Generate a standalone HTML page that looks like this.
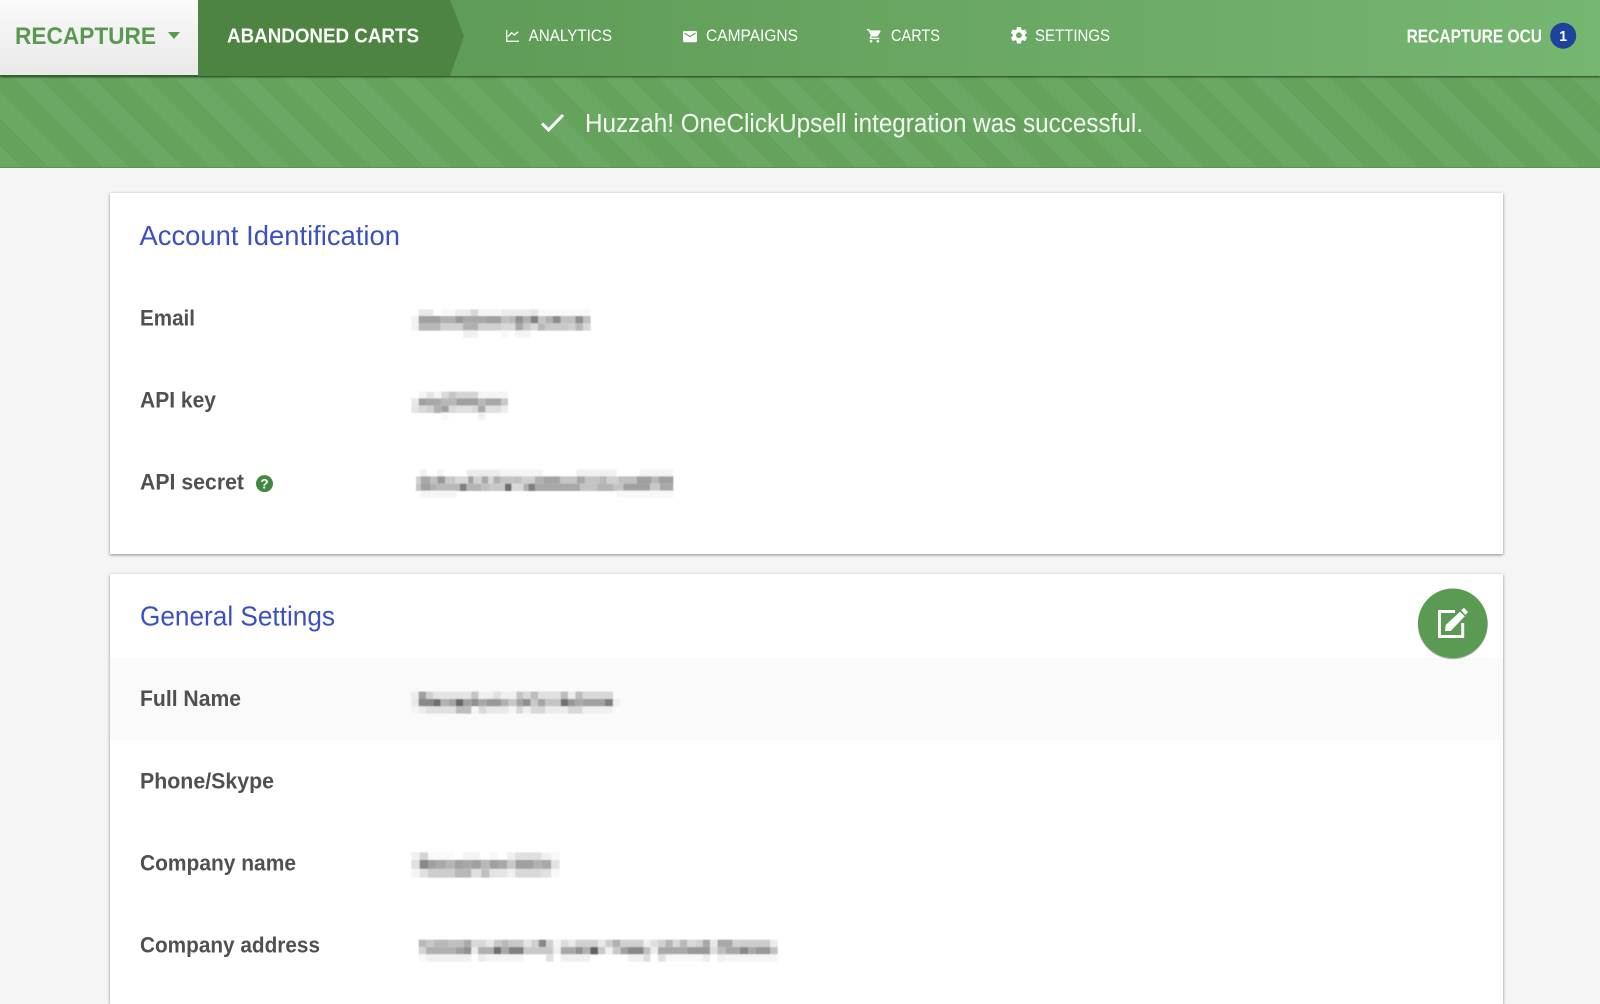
<!DOCTYPE html>
<html lang="en">
<head>
<meta charset="utf-8">
<title>Recapture</title>
<style>
html,body{margin:0;padding:0;width:1600px;height:992px;overflow:hidden;background:#f5f5f5;font-family:"Liberation Sans",sans-serif}
.abs{position:absolute}
#hdr{left:0;top:0;width:1600px;height:76px;background:linear-gradient(to right,#569650 0,#5f9c57 470px,#68a661 900px,#75b671 1600px);box-shadow:0 1px 2px rgba(0,0,0,.65);z-index:3}
#brand{left:0;top:0;width:198px;height:75px;background:linear-gradient(#fafafa,#e9e9e9);border-bottom:1px solid #2f6b28}
#tab{left:198px;top:0;width:266px;height:76px;background:#4e8441;clip-path:polygon(0 0,252px 0,266px 36px,252px 76px,0 76px)}
#banner{left:0;top:76px;width:1600px;height:91px;border-bottom:1px solid #4f9c46;background:repeating-linear-gradient(45deg,#6ba864 0,#6ba864 15px,#65a35d 15px,#65a35d 34.5px,#6ba864 34.5px,#6ba864 38px)}
.card{left:110px;width:1393px;background:#fff;box-shadow:0 1px 3px rgba(0,0,0,.45)}
#c1{top:193px;height:361px}
#c2{top:574px;height:430px}
#row{left:110px;top:658px;width:1393px;height:82px;background:#fafafa}
svg{position:absolute;left:0;top:0;z-index:5}
.lb{font-weight:700;font-size:22px;fill:#505050}
.nv{font-size:16.5px;fill:#fff}
.tt{font-size:28px;fill:#3d50c2}
.m{fill:none;stroke-width:22}
</style>
</head>
<body>
<div class="abs" id="banner"></div>
<div class="abs" id="hdr">
  <div class="abs" id="brand"></div>
  <div class="abs" id="tab"></div>
</div>
<div class="abs card" id="c1"></div>
<div class="abs card" id="c2"></div>
<div class="abs" id="row"></div>

<svg width="1600" height="992" viewBox="0 0 1600 992">
<defs><filter id="b" x="-5%" y="-20%" width="110%" height="140%"><feGaussianBlur stdDeviation=".65"/></filter></defs>

<text x="15" y="44" font-size="24" font-weight="700" fill="#5a9a50" textLength="141" lengthAdjust="spacingAndGlyphs">RECAPTURE</text>
<path d="M168 32h12l-6 7z" fill="#5a9a50"/>
<text x="227" y="42.7" font-size="20" font-weight="700" fill="#fff" textLength="192" lengthAdjust="spacingAndGlyphs">ABANDONED CARTS</text>

<path d="M506.7 30v11.3H519M508 36.7l3.7-4 2.6 2.3 3.9-3.3" fill="none" stroke="#fff" stroke-width="1.3"/>
<text class="nv" x="528.6" y="41" textLength="83.4" lengthAdjust="spacingAndGlyphs">ANALYTICS</text>
<path transform="translate(681.6 28.2) scale(.7)" fill="#fff" d="M20 4H4c-1.1 0-1.99.9-1.99 2L2 18c0 1.1.9 2 2 2h16c1.1 0 2-.9 2-2V6c0-1.1-.9-2-2-2zm0 4l-8 5-8-5V6l8 5 8-5v2z"/>
<text class="nv" x="706" y="41" textLength="92" lengthAdjust="spacingAndGlyphs">CAMPAIGNS</text>
<path transform="translate(866.3 27.6) scale(.68)" fill="#fff" d="M7 18c-1.1 0-1.99.9-1.99 2S5.9 22 7 22s2-.9 2-2-.9-2-2-2zM1 2v2h2l3.6 7.59-1.35 2.45c-.16.28-.25.61-.25.96 0 1.1.9 2 2 2h12v-2H7.42c-.14 0-.25-.11-.25-.25l.03-.12.9-1.63h7.45c.75 0 1.41-.41 1.75-1.03l3.58-6.47c.08-.14.12-.31.12-.48 0-.55-.45-1-1-1H5.21l-.94-2H1zm16 16c-1.1 0-1.99.9-1.99 2s.89 2 1.99 2 2-.9 2-2-.9-2-2-2z"/>
<text class="nv" x="891" y="41" textLength="49" lengthAdjust="spacingAndGlyphs">CARTS</text>
<path transform="translate(1009.1 25.4) scale(.82)" fill="#fff" d="M19.43 12.98c.04-.32.07-.64.07-.98s-.03-.66-.07-.98l2.11-1.65c.19-.15.24-.42.12-.64l-2-3.46c-.12-.22-.39-.3-.61-.22l-2.49 1c-.52-.4-1.08-.73-1.69-.98l-.38-2.65C14.46 2.18 14.25 2 14 2h-4c-.25 0-.46.18-.49.42l-.38 2.65c-.61.25-1.17.59-1.69.98l-2.49-1c-.23-.09-.49 0-.61.22l-2 3.46c-.13.22-.07.49.12.64l2.11 1.65c-.04.32-.07.65-.07.98s.03.66.07.98l-2.11 1.65c-.19.15-.24.42-.12.64l2 3.46c.12.22.39.3.61.22l2.49-1c.52.4 1.08.73 1.69.98l.38 2.65c.03.24.24.42.49.42h4c.25 0 .46-.18.49-.42l.38-2.65c.61-.25 1.17-.59 1.69-.98l2.49 1c.23.09.49 0 .61-.22l2-3.46c.12-.22.07-.49-.12-.64l-2.11-1.65zM12 15.5c-1.93 0-3.5-1.57-3.5-3.5s1.57-3.5 3.5-3.5 3.5 1.57 3.5 3.5-1.57 3.5-3.5 3.5z"/>
<text class="nv" x="1035" y="41" textLength="75" lengthAdjust="spacingAndGlyphs">SETTINGS</text>

<text x="1406.6" y="42.7" font-size="18" font-weight="700" fill="#fff" textLength="135.4" lengthAdjust="spacingAndGlyphs">RECAPTURE OCU</text>
<circle cx="1563.2" cy="35.7" r="13" fill="#1d439e"/>
<text x="1563.2" y="41" font-size="14.5" font-weight="700" fill="#fff" text-anchor="middle">1</text>

<path d="M542 123.5l6.5 6.5L563 115" fill="none" stroke="#fff" stroke-width="3"/>
<text x="585" y="132" font-size="25.5" fill="#fff" fill-opacity=".93" textLength="558" lengthAdjust="spacingAndGlyphs">Huzzah! OneClickUpsell integration was successful.</text>

<text class="tt" x="139.5" y="245" textLength="260.5" lengthAdjust="spacingAndGlyphs">Account Identification</text>
<text class="lb" x="140" y="325.5" textLength="55" lengthAdjust="spacingAndGlyphs">Email</text>
<text class="lb" x="140" y="407.5" textLength="76" lengthAdjust="spacingAndGlyphs">API key</text>
<text class="lb" x="140" y="489.5" textLength="104" lengthAdjust="spacingAndGlyphs">API secret</text>
<circle cx="264.5" cy="483.6" r="8.5" fill="#43883f"/>
<text x="264.5" y="488.6" font-size="13.5" font-weight="700" fill="#fff" text-anchor="middle">?</text>

<text class="tt" x="140" y="625.7" textLength="195" lengthAdjust="spacingAndGlyphs">General Settings</text>
<text class="lb" x="140" y="706.2" textLength="101" lengthAdjust="spacingAndGlyphs">Full Name</text>
<text class="lb" x="140" y="788.5" textLength="134" lengthAdjust="spacingAndGlyphs">Phone/Skype</text>
<text class="lb" x="140" y="870.5" textLength="156" lengthAdjust="spacingAndGlyphs">Company name</text>
<text class="lb" x="140" y="952.5" textLength="180" lengthAdjust="spacingAndGlyphs">Company address</text>

<circle cx="1452.8" cy="624.3" r="35" fill="#000" fill-opacity=".28"/>
<circle cx="1452.8" cy="623.3" r="34.8" fill="#5a9a52"/>
<path d="M1455 611.5H1439.5V636.5H1462.7V623" fill="none" stroke="#fff" stroke-width="3"/>
<path d="M1445 631l.7-6 14.3-13.3 4.8 4.6-14.1 14.7zM1461.3 610.2l2.7-2.5 4 4.6-2.7 2.6z" fill="#fff"/>

<g filter="url(#b)">
<!-- Email -->
<g class="m" transform="translate(408 304) scale(.3333)">
<path stroke="#e8e8e8" d="M32 27H76"/><path stroke="#f8f8f8" d="M100 27H142M390 27H548"/><path stroke="#ececec" d="M142 27H188M280 27H368"/><path stroke="#d8d8d8" d="M188 27H210"/><path stroke="#f4f4f4" d="M210 27H280"/><path stroke="#e4e4e4" d="M368 27H390"/>
<path stroke="#f2f2f2" d="M10 47H32M10 69H32"/>
<path stroke="#a0a0a0" d="M32 47H98M230 47H280"/><path stroke="#b0b0b0" d="M98 47H142M345 47H368M412 47H435"/><path stroke="#989898" d="M142 47H165"/><path stroke="#a8a8a8" d="M165 47H230"/><path stroke="#c0c0c0" d="M280 47H302M458 47H502M525 47H548"/><path stroke="#b8b8b8" d="M302 47H322"/><path stroke="#909090" d="M322 47H345M502 47H525"/><path stroke="#808080" d="M368 47H390"/><path stroke="#c4c4c4" d="M390 47H412"/><path stroke="#8c8c8c" d="M435 47H458"/>
<path stroke="#b8b8b8" d="M32 69H98M390 69H412M502 69H525"/><path stroke="#d0d0d0" d="M98 69H165M210 69H280M480 69H502"/><path stroke="#b0b0b0" d="M165 69H210"/><path stroke="#d8d8d8" d="M280 69H322M368 69H390M525 69H548"/><path stroke="#a8a8a8" d="M322 69H345"/><path stroke="#c8c8c8" d="M345 69H368M412 69H480"/>
<path stroke="#f0f0f0" d="M165 90H210"/><path stroke="#f8f8f8" d="M280 90H300"/><path stroke="#f4f4f4" d="M322 90H368"/>
</g>
<!-- API key -->
<g class="m" transform="translate(408 384) scale(.3333)">
<path stroke="#f4f4f4" d="M32 34H55M78 34H100M210 34H300"/><path stroke="#e4e4e4" d="M55 34H78"/><path stroke="#d8d8d8" d="M100 34H122"/><path stroke="#c4c4c4" d="M122 34H145"/><path stroke="#d4d4d4" d="M145 34H210"/>
<path stroke="#e8e8e8" d="M10 54H32"/><path stroke="#a0a0a0" d="M32 54H55M145 54H210"/><path stroke="#a8a8a8" d="M55 54H100M232 54H280"/><path stroke="#b8b8b8" d="M100 54H145M210 54H232"/><path stroke="#c8c8c8" d="M280 54H300"/>
<path stroke="#e4e4e4" d="M10 76H32"/><path stroke="#d8d8d8" d="M32 76H55M122 76H145M190 76H210"/><path stroke="#d0d0d0" d="M55 76H78"/><path stroke="#b0b0b0" d="M78 76H100"/><path stroke="#a0a0a0" d="M100 76H122"/><path stroke="#e0e0e0" d="M145 76H190M232 76H280"/><path stroke="#a8a8a8" d="M210 76H232"/><path stroke="#ececec" d="M280 76H300"/>
<path stroke="#f8f8f8" d="M100 96H122"/><path stroke="#f0f0f0" d="M210 96H232"/>
</g>
<!-- API secret -->
<g class="m" transform="translate(410 466) scale(.3333)">
<path stroke="#f0f0f0" d="M30 22H50M500 22H620"/><path stroke="#f4f4f4" d="M80 22H100M270 22H400M690 22H790"/><path stroke="#ececec" d="M170 22H270"/>
<path stroke="#d0d0d0" d="M18 42H32M190 42H215M335 42H375M590 42H625"/><path stroke="#a8a8a8" d="M32 42H62M215 42H235M500 42H525"/><path stroke="#c0c0c0" d="M62 42H82M310 42H335M625 42H680"/><path stroke="#989898" d="M82 42H105"/><path stroke="#c8c8c8" d="M105 42H135"/><path stroke="#d8d8d8" d="M135 42H175M235 42H250"/><path stroke="#a0a0a0" d="M175 42H190M680 42H725M745 42H790"/><path stroke="#b0b0b0" d="M250 42H270M375 42H400"/><path stroke="#c4c4c4" d="M270 42H310M450 42H500M525 42H570"/><path stroke="#a4a4a4" d="M400 42H450"/><path stroke="#b8b8b8" d="M570 42H590M725 42H745"/>
<path stroke="#c4c4c4" d="M18 64H32M510 64H560M610 64H640"/><path stroke="#a0a0a0" d="M32 64H62M640 64H720"/><path stroke="#b0b0b0" d="M62 64H80M340 64H355"/><path stroke="#b8b8b8" d="M80 64H150"/><path stroke="#808080" d="M150 64H170M355 64H375"/><path stroke="#b4b4b4" d="M170 64H215M560 64H610"/><path stroke="#c0c0c0" d="M215 64H240"/><path stroke="#c8c8c8" d="M240 64H285M720 64H750"/><path stroke="#707070" d="M285 64H305"/><path stroke="#d8d8d8" d="M305 64H340"/><path stroke="#a8a8a8" d="M375 64H510M750 64H790"/>
<path stroke="#f6f6f6" d="M30 85H140"/><path stroke="#f8f8f8" d="M620 85H790"/>
</g>
<!-- Full Name -->
<g class="m" transform="translate(408 680) scale(.3333)">
<path stroke="#ededed" d="M10 46H32"/><path stroke="#a0a0a0" d="M32 46H54"/><path stroke="#d0d0d0" d="M54 46H76"/><path stroke="#e4e4e4" d="M76 46H190"/><path stroke="#c4c4c4" d="M190 46H212M325 46H345"/><path stroke="#f0f0f0" d="M212 46H255M278 46H325"/><path stroke="#e0e0e0" d="M255 46H278M390 46H458"/><path stroke="#d8d8d8" d="M345 46H368M524 46H615"/><path stroke="#bcbcbc" d="M368 46H390M458 46H480M502 46H524"/><path stroke="#ececec" d="M480 46H502"/>
<path stroke="#e8e8e8" d="M10 68H32"/><path stroke="#888" d="M32 68H76"/><path stroke="#707070" d="M76 68H98M458 68H480"/><path stroke="#b0b0b0" d="M98 68H122M280 68H302"/><path stroke="#a4a4a4" d="M122 68H144M325 68H345M390 68H412"/><path stroke="#686868" d="M144 68H166"/><path stroke="#a0a0a0" d="M166 68H190M524 68H590"/><path stroke="#909090" d="M190 68H212M345 68H368"/><path stroke="#a8a8a8" d="M212 68H235M502 68H524"/><path stroke="#989898" d="M235 68H280M480 68H502"/><path stroke="#c8c8c8" d="M302 68H325M368 68H390"/><path stroke="#c4c4c4" d="M412 68H458"/><path stroke="#808080" d="M590 68H615"/><path stroke="#f0f0f0" d="M615 68H635"/>
<path stroke="#f6f6f6" d="M10 90H32M190 90H212M302 90H325"/><path stroke="#ececec" d="M32 90H54M412 90H480"/><path stroke="#e0e0e0" d="M54 90H144"/><path stroke="#bcbcbc" d="M144 90H190"/><path stroke="#d8d8d8" d="M212 90H235M325 90H345M368 90H412M480 90H524"/><path stroke="#e8e8e8" d="M235 90H302"/><path stroke="#f0f0f0" d="M345 90H368M524 90H615"/>
</g>
<!-- Company name -->
<g class="m" transform="translate(408 845) scale(.3333)">
<path stroke="#f0f0f0" d="M10 33H35M298 33H322M400 33H430"/><path stroke="#d4d4d4" d="M35 33H60"/><path stroke="#fafafa" d="M60 33H140"/><path stroke="#f4f4f4" d="M165 33H215"/><path stroke="#f8f8f8" d="M245 33H270M430 33H455"/><path stroke="#e0e0e0" d="M322 33H400"/>
<g style="stroke-width:27"><path stroke="#e0e0e0" d="M10 58H35"/><path stroke="#888" d="M35 58H60"/><path stroke="#a0a0a0" d="M60 58H85M140 58H165M190 58H220M245 58H270M322 58H375"/><path stroke="#a8a8a8" d="M85 58H115M165 58H190M270 58H298M400 58H430"/><path stroke="#b4b4b4" d="M115 58H140"/><path stroke="#b8b8b8" d="M220 58H245"/><path stroke="#c8c8c8" d="M298 58H322"/><path stroke="#b0b0b0" d="M375 58H400"/><path stroke="#e4e4e4" d="M430 58H455"/></g>
<g style="stroke-width:26"><path stroke="#f4f4f4" d="M10 85H35"/><path stroke="#e0e0e0" d="M35 85H60M190 85H220M400 85H430"/><path stroke="#ccc" d="M60 85H140"/><path stroke="#b8b8b8" d="M140 85H190"/><path stroke="#c0c0c0" d="M220 85H245"/><path stroke="#e4e4e4" d="M245 85H298"/><path stroke="#f0f0f0" d="M298 85H322"/><path stroke="#d8d8d8" d="M322 85H400"/><path stroke="#f8f8f8" d="M430 85H455"/></g>
</g>
<!-- Company address -->
<g class="m" transform="translate(412 928) scale(.3333)">
<path stroke="#b8b8b8" d="M20 46H42M65 46H110M268 46H290M804 46H826"/><path stroke="#c8c8c8" d="M42 46H65M245 46H268M290 46H335"/><path stroke="#c0c0c0" d="M110 46H155"/><path stroke="#a8a8a8" d="M155 46H178M872 46H894M916 46H962"/><path stroke="#d8d8d8" d="M178 46H222M782 46H804M826 46H850"/><path stroke="#e8e8e8" d="M222 46H245M468 46H490M558 46H580M894 46H916"/><path stroke="#e4e4e4" d="M335 46H358"/><path stroke="#d0d0d0" d="M358 46H380M402 46H424M490 46H558M625 46H695M738 46H760M850 46H872M962 46H984"/><path stroke="#888" d="M380 46H402"/><path stroke="#f4f4f4" d="M424 46H446"/><path stroke="#dcdcdc" d="M446 46H468"/><path stroke="#ccc" d="M580 46H602M984 46H1075"/><path stroke="#b0b0b0" d="M602 46H625"/><path stroke="#f0f0f0" d="M695 46H715"/><path stroke="#e0e0e0" d="M715 46H738"/><path stroke="#b4b4b4" d="M760 46H782"/><path stroke="#ececec" d="M1075 46H1097"/>
<path stroke="#d4d4d4" d="M20 68H42"/><path stroke="#b0b0b0" d="M42 68H130M198 68H245M512 68H535"/><path stroke="#a0a0a0" d="M130 68H155M625 68H648"/><path stroke="#909090" d="M155 68H178M490 68H512"/><path stroke="#ececec" d="M178 68H198M715 68H738"/><path stroke="#707070" d="M245 68H268"/><path stroke="#a8a8a8" d="M268 68H290M446 68H490M738 68H826M940 68H984M1008 68H1030"/><path stroke="#808080" d="M290 68H335"/><path stroke="#c8c8c8" d="M335 68H424M558 68H580M602 68H625"/><path stroke="#f0f0f0" d="M424 68H446M580 68H602"/><path stroke="#606060" d="M535 68H558"/><path stroke="#888" d="M648 68H695M984 68H1008"/><path stroke="#c0c0c0" d="M695 68H715M1075 68H1097"/><path stroke="#989898" d="M826 68H894M1030 68H1075"/><path stroke="#dcdcdc" d="M894 68H916"/><path stroke="#bcbcbc" d="M916 68H940"/>
<path stroke="#f8f8f8" d="M20 90H42M760 90H870"/><path stroke="#f0f0f0" d="M42 90H178M446 90H535M648 90H695M916 90H940"/><path stroke="#ececec" d="M198 90H222M872 90H894"/><path stroke="#f4f4f4" d="M222 90H335"/><path stroke="#e0e0e0" d="M402 90H424M738 90H760"/><path stroke="#dcdcdc" d="M695 90H715"/><path stroke="#f6f6f6" d="M940 90H1097"/>
</g>
</g>
</svg>
</body>
</html>
